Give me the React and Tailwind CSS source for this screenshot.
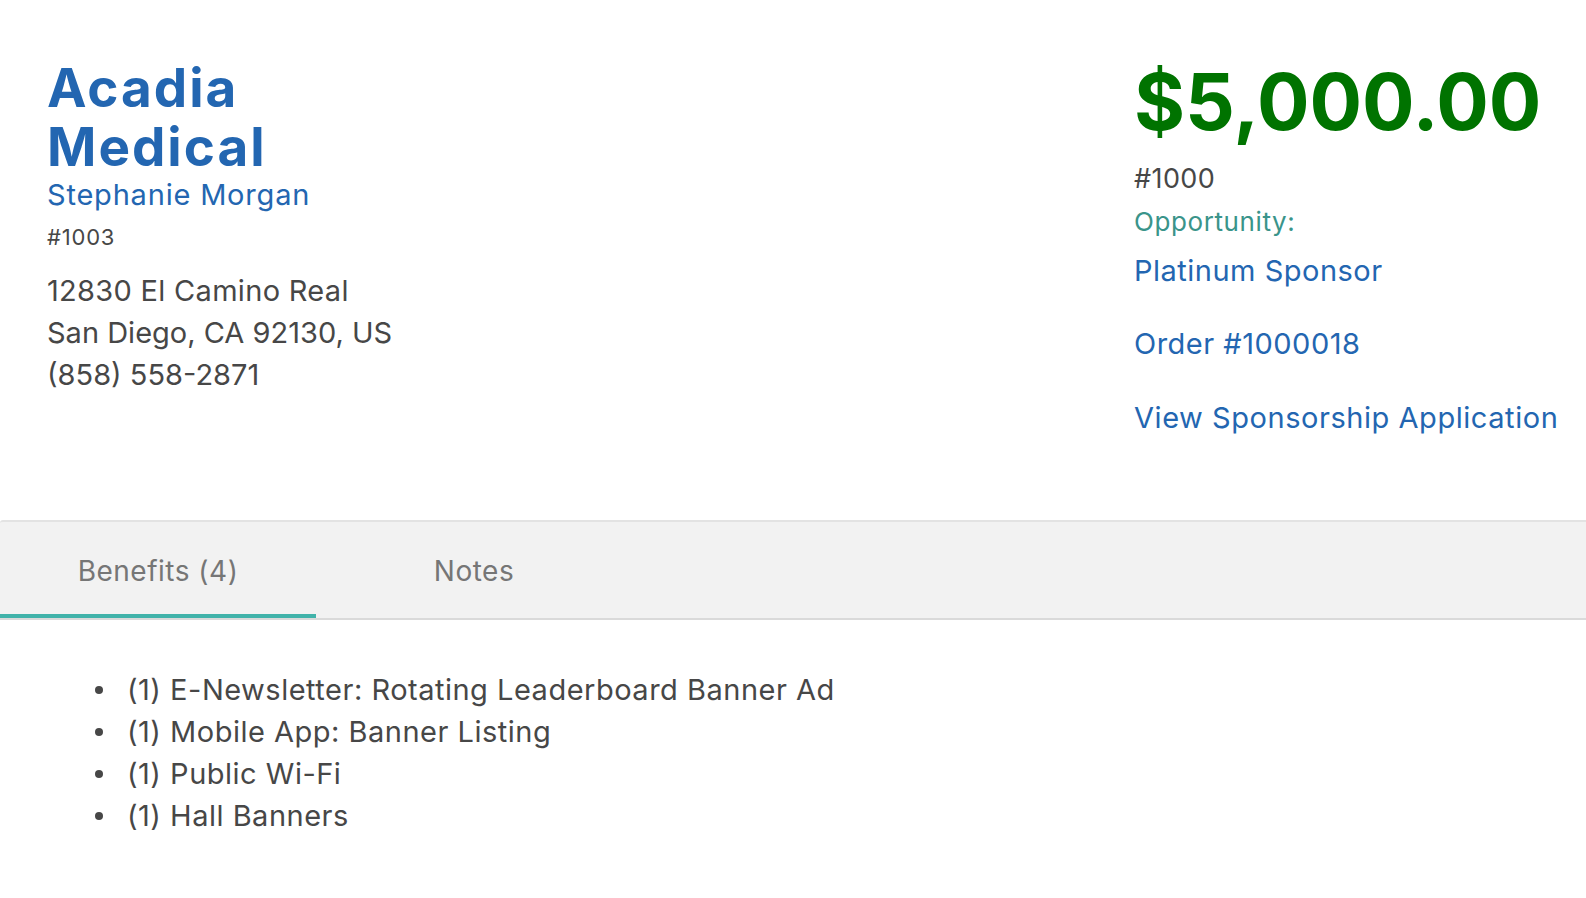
import React from "react";

const benefits = [
  "(1) E-Newsletter: Rotating Leaderboard Banner Ad",
  "(1) Mobile App: Banner Listing",
  "(1) Public Wi-Fi",
  "(1) Hall Banners",
];

export default function App() {
  return (
    <div className="min-h-[898px] w-full bg-white font-['Inter',sans-serif] text-[#474747]">
      <div className="flex justify-between pt-[59px] pb-[84px]">
        <div className="flex flex-col pl-[47px]">
          <h1 className="text-[53px] font-bold leading-[59px] tracking-[2px] text-[#2366b1]">
            Acadia
            <br />
            Medical
          </h1>
          <div className="text-[29px] leading-[36px] tracking-[0.8px] text-[#2366b1]">Stephanie Morgan</div>
          <div className="mt-[9px] text-[22px] leading-[30px] tracking-[0.8px] text-[#474747]">#1003</div>
          <div className="mt-[18px] text-[29px] leading-[42px] tracking-[0px] text-[#474747]">
            <div className="tracking-[0.3px]">12830 El Camino Real</div>
            <div>San Diego, CA 92130, US</div>
            <div>(858) 558-2871</div>
          </div>
        </div>
        <div className="flex w-[452px] flex-col">
          <div className="text-[78px] font-bold leading-[86px] tracking-[0px] text-[#007300]">$5,000.00</div>
          <div className="mt-[16px] text-[27px] leading-[36px] tracking-[0.4px] text-[#474747]">#1000</div>
          <div className="mt-[8px] text-[26px] leading-[34px] tracking-[0.6px] text-[#3a948a]">Opportunity:</div>
          <a className="mt-[14px] text-[29px] leading-[36px] tracking-[0.5px] text-[#2366b1]">Platinum Sponsor</a>
          <a className="mt-[37px] text-[29px] leading-[36px] tracking-[0.5px] text-[#2366b1]">Order #1000018</a>
          <a className="mt-[38px] text-[29px] leading-[36px] tracking-[0.55px] text-[#2366b1]">View Sponsorship Application</a>
        </div>
      </div>

      <div className="flex h-[100px] rounded-tl-[3px] border-t-2 border-b-2 border-t-[#e3e3e3] border-b-[#dadada] bg-[#f2f2f2]">
        <div className="flex w-[316px] flex-col">
          <div className="flex flex-1 items-center justify-center pt-[6px] text-[28px] tracking-[0.5px] text-[#767676]">Benefits (4)</div>
          <div className="h-[4px] bg-[#41b3aa]" />
        </div>
        <div className="flex w-[316px] flex-col">
          <div className="flex flex-1 items-center justify-center pt-[6px] text-[28px] tracking-[0.5px] text-[#767676]">Notes</div>
          <div className="h-[4px]" />
        </div>
      </div>

      <ul className="mt-[49px] flex flex-col pl-[95px]">
        {benefits.map((b) => (
          <li key={b} className="flex items-center text-[29px] leading-[42px] tracking-[0.5px] text-[#474747]">
            <span className="mr-[24px] h-[8px] w-[8px] shrink-0 rounded-full bg-[#474747]" />
            <span>{b}</span>
          </li>
        ))}
      </ul>
    </div>
  );
}
